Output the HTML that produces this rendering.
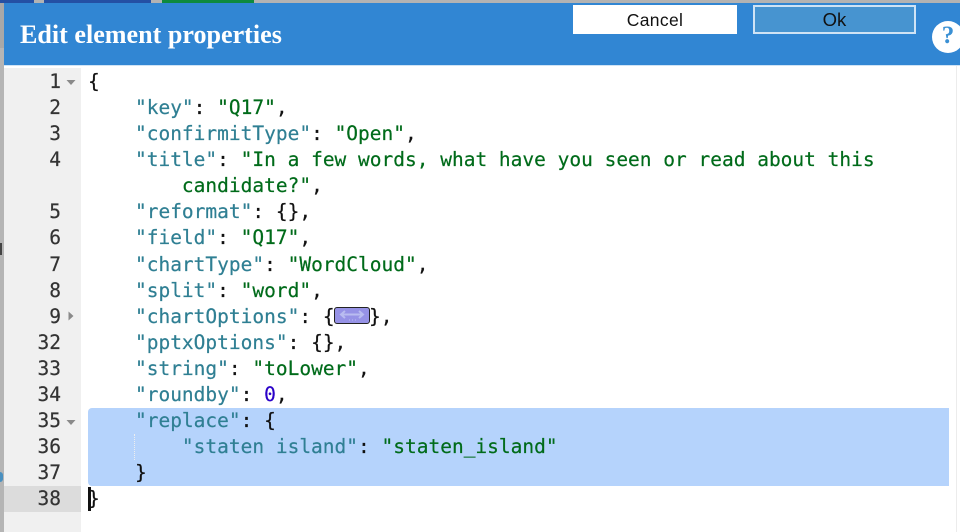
<!DOCTYPE html>
<html><head><meta charset="utf-8">
<style>
html,body{margin:0;padding:0;width:960px;height:532px;overflow:hidden;background:#fff}
#p{position:relative;width:960px;height:532px;overflow:hidden;background:#fff}
#p div{position:absolute}
.l,.n{font-family:"DejaVu Sans Mono","Liberation Mono",monospace;font-size:19.5px;line-height:26px;height:26px;white-space:pre;-webkit-text-stroke:0.2px currentColor}
.n{left:4px;width:57px;text-align:right;color:#333}
.l{left:88px;color:#111}
.k{color:#2f7f93}
.s{color:#006b1a}
.d{color:#2a00c8}
</style></head><body><div id="p">
<div style="left:0;top:0;width:960px;height:3px;background:#b3b3b3"></div>
<div style="left:0;top:0;width:34px;height:3px;background:#2450a4"></div>
<div style="left:44px;top:0;width:107px;height:3px;background:#2450a4"></div>
<div style="left:162px;top:0;width:92px;height:3px;background:#0e8a3e"></div>
<div style="left:0;top:3px;width:4px;height:529px;background:#b5b5b5"></div>
<div style="left:0;top:3px;width:4px;height:45px;background:#a8a8a8"></div>
<div style="left:0;top:243px;width:2px;height:12px;background:#444"></div>
<div style="left:0;top:472px;width:3px;height:10px;background:#4a90c0;border-radius:0 5px 5px 0"></div>
<div style="left:4px;top:3px;width:956px;height:62px;background:#3186d3"></div>
<div style="left:4px;top:65px;width:956px;height:1px;background:#cfe3f5"></div>
<div style="left:20px;top:18px;font:bold 26.1px/33px 'Liberation Serif',serif;color:#fff;white-space:nowrap">Edit element properties</div>
<div style="left:573px;top:5px;width:164px;height:29px;background:#fff;font:17.5px/30px 'Liberation Sans',sans-serif;letter-spacing:.35px;text-align:center;color:#111">Cancel</div>
<div style="left:753px;top:5px;width:159px;height:25px;border:2px solid #cfe3f5;background:#4794d0;font:18.5px/26px 'Liberation Sans',sans-serif;text-align:center;color:#111">Ok</div>
<div style="left:932px;top:21px;width:32px;height:32px;border-radius:50%;background:#fff;font:bold 25px/30px 'Liberation Serif',serif;text-align:center;color:#3a90d4">?</div>

<div style="left:4px;top:68px;width:77px;height:464px;background:#f0f0f0"></div>
<div style="left:4px;top:486px;width:77px;height:26px;background:#dcdcdc"></div>
<div style="left:88px;top:408px;width:861px;height:78px;background:#b5d3fc;border-radius:4px 0 0 4px"></div>
<div style="left:134px;top:434px;width:0;height:26px;border-left:1px dotted #eee"></div>
<div style="left:956px;top:66px;width:1px;height:466px;background:#ececec"></div>

<div class="n" style="top:69px">1</div>
<div class="n" style="top:95px">2</div>
<div class="n" style="top:121px">3</div>
<div class="n" style="top:147px">4</div>
<div class="n" style="top:199px">5</div>
<div class="n" style="top:225px">6</div>
<div class="n" style="top:252px">7</div>
<div class="n" style="top:278px">8</div>
<div class="n" style="top:304px">9</div>
<div class="n" style="top:330px">32</div>
<div class="n" style="top:356px">33</div>
<div class="n" style="top:382px">34</div>
<div class="n" style="top:408px">35</div>
<div class="n" style="top:434px">36</div>
<div class="n" style="top:460px">37</div>
<div class="n" style="top:486px">38</div>

<svg style="position:absolute;left:0;top:0" width="90" height="532">
<path d="M66.5 80h9l-4.500 5z" fill="#8a8a8a"/>
<path d="M68.500 311.500v9l5-4.500z" fill="#8a8a8a"/>
<path d="M66.500 420h9l-4.500 5z" fill="#8a8a8a"/>
</svg>

<div class="l" style="top:69px">{</div>
<div class="l" style="top:95px">    <span class="k">"key"</span>: <span class="s">"Q17"</span>,</div>
<div class="l" style="top:121px">    <span class="k">"confirmitType"</span>: <span class="s">"Open"</span>,</div>
<div class="l" style="top:147px">    <span class="k">"title"</span>: <span class="s">"In a few words, what have you seen or read about this</span></div>
<div class="l" style="top:173px">        <span class="s">candidate?"</span>,</div>
<div class="l" style="top:199px">    <span class="k">"reformat"</span>: {},</div>
<div class="l" style="top:225px">    <span class="k">"field"</span>: <span class="s">"Q17"</span>,</div>
<div class="l" style="top:252px">    <span class="k">"chartType"</span>: <span class="s">"WordCloud"</span>,</div>
<div class="l" style="top:278px">    <span class="k">"split"</span>: <span class="s">"word"</span>,</div>
<div class="l" style="top:304px">    <span class="k">"chartOptions"</span>: {</div>
<div style="left:334px;top:307px;width:36px;height:17px;box-sizing:border-box;border:1px solid #222;border-radius:3px;background:#9692e6"></div>
<svg style="position:absolute;left:334px;top:307px" width="36" height="17"><path d="M7 7.500h22M11 4l-4 3.500 4 3.500M25 4l4 3.500-4 3.500" fill="none" stroke="#b9bcf0" stroke-width="2"/><path d="M15 13h1M18 13h1M21 13h1" stroke="#b9bcf0"/></svg>
<div class="l" style="top:304px;left:369px">},</div>
<div class="l" style="top:330px">    <span class="k">"pptxOptions"</span>: {},</div>
<div class="l" style="top:356px">    <span class="k">"string"</span>: <span class="s">"toLower"</span>,</div>
<div class="l" style="top:382px">    <span class="k">"roundby"</span>: <span class="d">0</span>,</div>
<div class="l" style="top:408px">    <span class="k">"replace"</span>: {</div>
<div class="l" style="top:434px">        <span class="k">"staten island"</span>: <span class="s">"staten_island"</span></div>
<div class="l" style="top:460px">    }</div>
<div class="l" style="top:486px">}</div>
<div style="left:88px;top:487px;width:3px;height:24px;background:#111"></div>
</div></body></html>
